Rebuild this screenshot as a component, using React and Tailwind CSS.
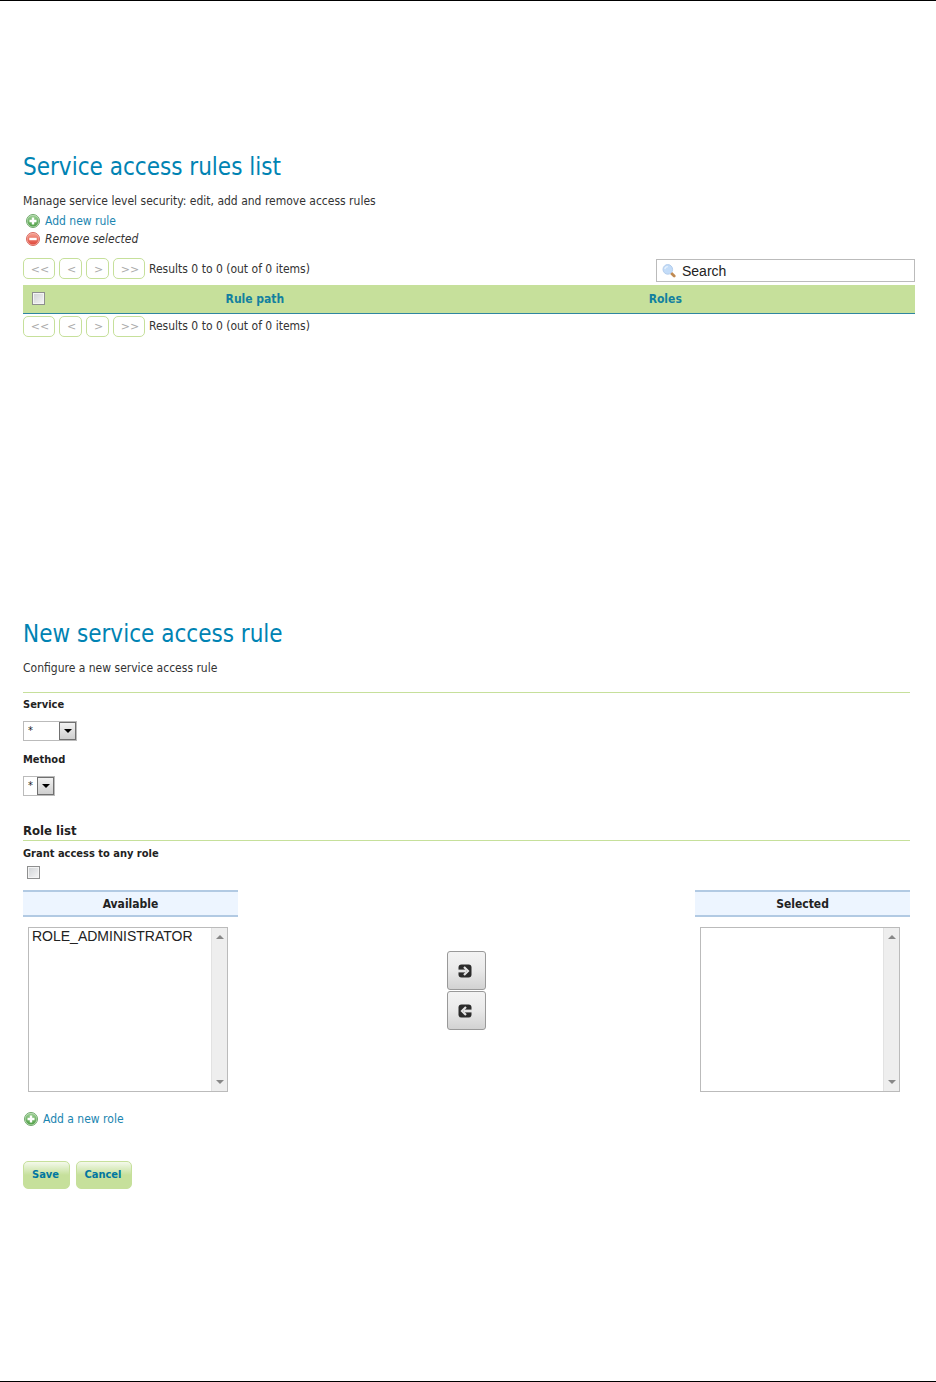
import React, { useState } from 'react';

// Icons
const AddIcon = () => (
  <svg viewBox="0 0 14 14" className="h-3.5 w-3.5 shrink-0" aria-hidden="true">
    <defs>
      <linearGradient id="add-fill" x1="0" y1="0" x2="0" y2="1">
        <stop offset="0" stopColor="#9ccf94" />
        <stop offset="1" stopColor="#4f9f45" />
      </linearGradient>
    </defs>
    <circle cx="7" cy="7" r="6.5" fill="#cfe6ca" stroke="#6fa86a" strokeWidth="1" />
    <circle cx="7" cy="7" r="5.6" fill="url(#add-fill)" />
    <path d="M5.8 3.5h2.4v2.3h2.3v2.4H8.2v2.3H5.8V8.2H3.5V5.8h2.3z" fill="#fff" />
  </svg>
);

const RemoveIcon = () => (
  <svg viewBox="0 0 14 14" className="h-3.5 w-3.5 shrink-0" aria-hidden="true">
    <defs>
      <linearGradient id="remove-fill" x1="0" y1="0" x2="0" y2="1">
        <stop offset="0" stopColor="#f5a090" />
        <stop offset="1" stopColor="#e0483c" />
      </linearGradient>
    </defs>
    <circle cx="7" cy="7" r="6.5" fill="#f5bdb4" stroke="#d8695f" strokeWidth="1" />
    <circle cx="7" cy="7" r="5.6" fill="url(#remove-fill)" />
    <path d="M3.3 5.8h7.4v2.4H3.3z" fill="#fff" />
  </svg>
);

const SearchIcon = () => (
  <svg viewBox="0 0 14 14" className="h-3.5 w-3.5 shrink-0" aria-hidden="true">
    <path d="M9.4 9.2l2.8 2.8" stroke="#c08a52" strokeWidth="2.8" strokeLinecap="round" />
    <circle cx="5.8" cy="5.4" r="4.8" fill="#c3dcf8" stroke="#b4cdec" strokeWidth="1" />
    <path d="M2.8 5.2a3.2 3.2 0 0 1 3-2.6" stroke="#e8f3fe" strokeWidth="1.2" fill="none" />
  </svg>
);

const MoveIcon = ({ flip }) => (
  <svg viewBox="0 0 14 14" className={`h-3.5 w-3.5 ${flip ? '-scale-x-100' : ''}`} aria-hidden="true">
    <rect x="0.5" y="0.5" width="13" height="13" rx="3" fill="#2b2b2b" />
    <path d="M0 5.6h8v2.8H0z" fill="#e4e4e4" />
    <path d="M6 3L10 7l-4 4" stroke="#e4e4e4" strokeWidth="2.2" fill="none" />
  </svg>
);

const Triangle = ({ up, className = '' }) => (
  <svg viewBox="0 0 8 4" className={`h-1 w-2 ${className}`} aria-hidden="true">
    <path d={up ? 'M0 4l4-4 4 4z' : 'M0 0h8L4 4z'} fill="currentColor" />
  </svg>
);

const Checkbox = ({ className = '', ...props }) => (
  <input
    type="checkbox"
    className={`block h-[13px] w-[13px] appearance-none border border-[#8e8f8f] bg-linear-to-br from-[#cfd2d5] to-[#f6f6f6] shadow-[inset_0_0_0_1px_#f4f4f4] checked:bg-[#0083b3] ${className}`}
    {...props}
  />
);

const pages = [
  { label: '<<', title: 'First page', width: 'w-8' },
  { label: '<', title: 'Previous page', width: 'w-[23px]' },
  { label: '>', title: 'Next page', width: 'w-[23px]' },
  { label: '>>', title: 'Last page', width: 'w-8' }
];

const Pager = () => (
  <div className="flex h-[21px] items-center gap-1">
    {pages.map((page) => (
      <button
        key={page.label}
        type="button"
        disabled
        title={page.title}
        className={`h-[21px] rounded-[5px] border border-[#c6e09b] pt-0.5 pl-0.5 text-center font-['DejaVu_Sans',sans-serif] text-[11px] leading-4 text-[#aaaaaa] italic ${page.width}`}
      >
        {page.label}
      </button>
    ))}
    <span>Results 0 to 0 (out of 0 items)</span>
  </div>
);

const Dropdown = ({ id, label, width }) => (
  <div>
    <label htmlFor={id} className="block text-[11px] leading-[18px] font-bold text-[#222222]">
      {label}
    </label>
    <div className={`relative mt-[7px] h-5 ${width}`}>
      <select
        id={id}
        className="block h-5 w-full appearance-none border border-[#bbbbbb] bg-white pl-1 text-[11px] leading-[18px] text-[#222222]"
      >
        <option>*</option>
      </select>
      <span className="pointer-events-none absolute top-px right-px flex h-[18px] w-[17px] items-center justify-center border border-[#707070] bg-linear-to-b from-[#f2f2f2] to-[#cfcfcf]">
        <Triangle className="text-black" />
      </span>
    </div>
  </div>
);

const RoleBox = ({ id, title, roles }) => (
  <div className="w-[215px]">
    <label
      htmlFor={id}
      className="block h-[27px] border-y-2 border-[#b2cae3] bg-[#edf5ff] text-center leading-6 font-bold text-[#222222]"
    >
      {title}
    </label>
    <div className="mt-[10px] ml-[5px] flex h-[165px] w-[200px] border border-[#bbbbbb]">
      <select
        id={id}
        multiple
        className="min-w-0 flex-1 appearance-none overflow-hidden bg-white font-['Liberation_Sans',sans-serif] text-[14px] leading-5 text-[#222222]"
      >
        {roles.map((role) => (
          <option key={role} className="px-[3px] py-0">{role}</option>
        ))}
      </select>
      <div className="flex w-4 flex-col items-center justify-between border-l border-[#e2e2e2] bg-[#eeeeee] py-[7px] text-[#888888]">
        <Triangle up />
        <Triangle />
      </div>
    </div>
  </div>
);

const moveButton =
  'flex h-[39px] w-[39px] items-center justify-center rounded-[3px] border border-[#999999] bg-linear-to-b from-[#f3f3f3] from-0% via-[#e9e9e9] via-50% to-[#d2d2d2] pr-1';
const formButton =
  'h-7 rounded-[5px] border border-[#c6e09b] bg-linear-to-b from-[#f4f9eb] to-[#c6e09b] to-50% pr-0.5 text-[11px] leading-[18px] font-bold text-[#0076a1]';

const App = () => {
  const [search, setSearch] = useState('Search');

  return (
    <main className="border-y border-black bg-white pt-[148px] pr-[21px] pb-48 pl-[23px] font-['DejaVu_Sans_Condensed','DejaVu_Sans',sans-serif] text-[12px] leading-[18px] text-[#333333]">
      {/* Rules list */}
      <section>
        <h1 className="text-[24px] leading-9 text-[#0083b3]">Service access rules list</h1>
        <p className="mt-[7px]">Manage service level security: edit, add and remove access rules</p>
        <ul className="mt-0.5 pl-[3px]">
          <li>
            <a href="#new-rule" className="inline-flex items-center gap-[5px] align-top text-[#1a85b0]">
              <AddIcon />
              Add new rule
            </a>
          </li>
          <li className="flex items-center gap-[5px] italic">
            <RemoveIcon />
            Remove selected
          </li>
        </ul>

        <div className="mt-[10px] flex h-[27px] items-start justify-between">
          <Pager />
          <div className="mt-px flex h-[23px] w-[259px] items-center gap-1.5 border border-[#bbbbbb] pl-[5px]">
            <SearchIcon />
            <input
              type="text"
              aria-label="Search"
              value={search}
              onChange={(e) => setSearch(e.target.value)}
              className="min-w-0 flex-1 font-['Liberation_Sans',sans-serif] text-[14px] leading-[18px] text-[#222222] outline-none"
            />
          </div>
        </div>

        <table className="w-full table-fixed border-collapse bg-[#c6e09b]">
          <thead>
            <tr className="h-7 border-b border-[#2f86a0] text-[#13809f]">
              <th className="w-[3%] p-0 pl-[9px]">
                <Checkbox aria-label="Select all rules" />
              </th>
              <th className="w-[46%] p-0 font-bold">Rule path</th>
              <th className="w-[46%] p-0 font-bold">Roles</th>
              <th className="w-[5%] p-0" />
            </tr>
          </thead>
        </table>
        <div className="mt-0.5">
          <Pager />
        </div>
      </section>

      {/* New rule form */}
      <section id="new-rule" className="mt-[279px] pr-[5px]">
        <h1 className="text-[24px] leading-9 text-[#0083b3]">New service access rule</h1>
        <p className="mt-[7px]">Configure a new service access rule</p>

        <form onSubmit={(e) => e.preventDefault()} className="mt-[15px] border-t border-t-[#c6e09b] pt-[3px]">
          <div className="flex flex-col gap-[10px]">
            <Dropdown id="service" label="Service" width="w-[54px]" />
            <Dropdown id="method" label="Method" width="w-8" />
          </div>

          <h2 className="mt-[26px] border-b border-b-[#c6e09b] text-[13px] leading-[18px] font-bold text-[#222222]">
            Role list
          </h2>
          <label htmlFor="any-role" className="mt-1 block text-[11px] leading-[18px] font-bold text-[#222222]">
            Grant access to any role
          </label>
          <Checkbox id="any-role" className="mt-[3px] ml-1" />

          <div className="mt-[11px] flex items-center justify-between">
            <RoleBox id="available" title="Available" roles={['ROLE_ADMINISTRATOR']} />
            <div className="flex flex-col gap-px">
              <button type="button" aria-label="Add to selected" className={moveButton}>
                <MoveIcon />
              </button>
              <button type="button" aria-label="Remove from selected" className={moveButton}>
                <MoveIcon flip />
              </button>
            </div>
            <RoleBox id="selected" title="Selected" roles={[]} />
          </div>

          <a href="#new-role" className="mt-[18px] ml-px flex w-fit items-center gap-[5px] text-[#1a85b0]">
            <AddIcon />
            Add a new role
          </a>

          <div className="mt-[33px] flex gap-1.5">
            <button type="submit" className={`w-[47px] ${formButton}`}>Save</button>
            <button type="button" className={`w-14 ${formButton}`}>Cancel</button>
          </div>
        </form>
      </section>
    </main>
  );
};

export default App;
